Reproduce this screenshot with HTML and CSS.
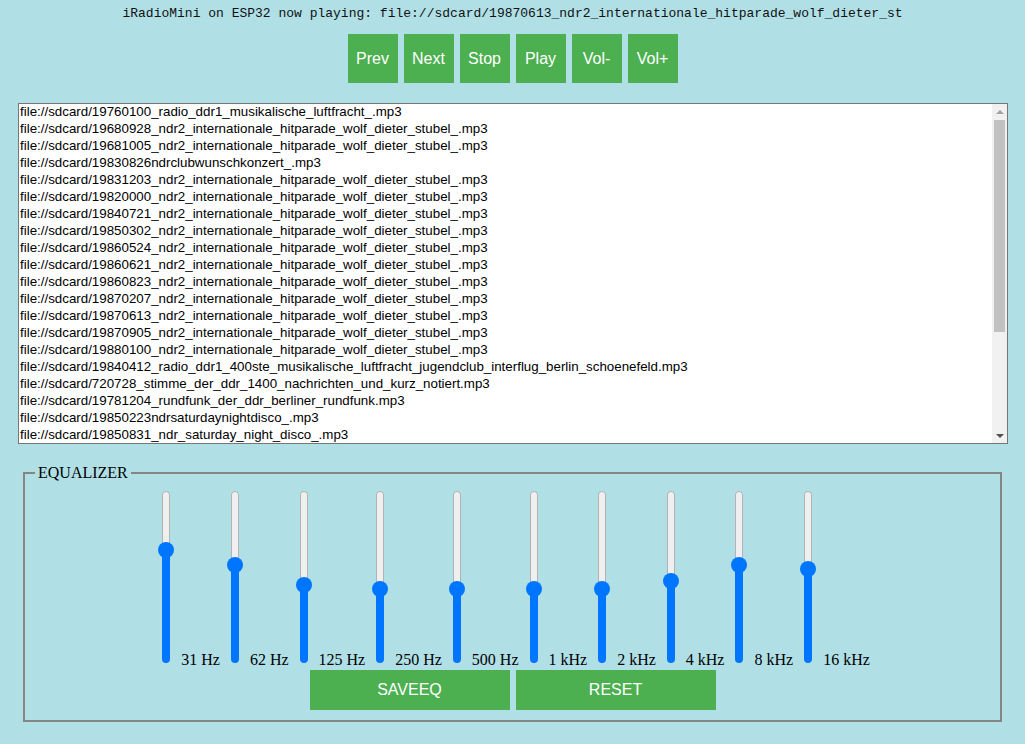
FILE: index.html
```html
<!DOCTYPE html>
<html>
<head>
<meta charset="utf-8">
<title>iRadioMini</title>
<link rel="stylesheet" href="styles.css">
</head>
<body>
<div class="title">iRadioMini on ESP32 now playing: file://sdcard/19870613_ndr2_internationale_hitparade_wolf_dieter_st</div>
<div class="controls">
  <button class="btn">Prev</button>
  <button class="btn">Next</button>
  <button class="btn">Stop</button>
  <button class="btn">Play</button>
  <button class="btn">Vol-</button>
  <button class="btn">Vol+</button>
</div>
<div class="playlist">
  <div class="items">
    <div class="item">file://sdcard/19760100_radio_ddr1_musikalische_luftfracht_.mp3</div>
    <div class="item">file://sdcard/19680928_ndr2_internationale_hitparade_wolf_dieter_stubel_.mp3</div>
    <div class="item">file://sdcard/19681005_ndr2_internationale_hitparade_wolf_dieter_stubel_.mp3</div>
    <div class="item">file://sdcard/19830826ndrclubwunschkonzert_.mp3</div>
    <div class="item">file://sdcard/19831203_ndr2_internationale_hitparade_wolf_dieter_stubel_.mp3</div>
    <div class="item">file://sdcard/19820000_ndr2_internationale_hitparade_wolf_dieter_stubel_.mp3</div>
    <div class="item">file://sdcard/19840721_ndr2_internationale_hitparade_wolf_dieter_stubel_.mp3</div>
    <div class="item">file://sdcard/19850302_ndr2_internationale_hitparade_wolf_dieter_stubel_.mp3</div>
    <div class="item">file://sdcard/19860524_ndr2_internationale_hitparade_wolf_dieter_stubel_.mp3</div>
    <div class="item">file://sdcard/19860621_ndr2_internationale_hitparade_wolf_dieter_stubel_.mp3</div>
    <div class="item">file://sdcard/19860823_ndr2_internationale_hitparade_wolf_dieter_stubel_.mp3</div>
    <div class="item">file://sdcard/19870207_ndr2_internationale_hitparade_wolf_dieter_stubel_.mp3</div>
    <div class="item">file://sdcard/19870613_ndr2_internationale_hitparade_wolf_dieter_stubel_.mp3</div>
    <div class="item">file://sdcard/19870905_ndr2_internationale_hitparade_wolf_dieter_stubel_.mp3</div>
    <div class="item">file://sdcard/19880100_ndr2_internationale_hitparade_wolf_dieter_stubel_.mp3</div>
    <div class="item">file://sdcard/19840412_radio_ddr1_400ste_musikalische_luftfracht_jugendclub_interflug_berlin_schoenefeld.mp3</div>
    <div class="item">file://sdcard/720728_stimme_der_ddr_1400_nachrichten_und_kurz_notiert.mp3</div>
    <div class="item">file://sdcard/19781204_rundfunk_der_ddr_berliner_rundfunk.mp3</div>
    <div class="item">file://sdcard/19850223ndrsaturdaynightdisco_.mp3</div>
    <div class="item">file://sdcard/19850831_ndr_saturday_night_disco_.mp3</div>
  </div>
  <div class="scrollbar">
    <div class="sb-btn"><span class="arrow-up"></span></div>
    <div class="sb-track"><div class="sb-thumb"></div></div>
    <div class="sb-btn"><span class="arrow-down"></span></div>
  </div>
</div>
<fieldset class="eq">
  <legend class="eq-legend">EQUALIZER</legend>
  <div class="eq-row"><span class="slider"><span class="track"><span class="rest"></span><span class="fill" style="height:113px"></span></span><span class="thumb" style="bottom:105px"></span></span> 31 Hz <span class="slider"><span class="track"><span class="rest"></span><span class="fill" style="height:98px"></span></span><span class="thumb" style="bottom:90px"></span></span> 62 Hz <span class="slider"><span class="track"><span class="rest"></span><span class="fill" style="height:78px"></span></span><span class="thumb" style="bottom:70px"></span></span> 125 Hz <span class="slider"><span class="track"><span class="rest"></span><span class="fill" style="height:74px"></span></span><span class="thumb" style="bottom:66px"></span></span> 250 Hz <span class="slider"><span class="track"><span class="rest"></span><span class="fill" style="height:74px"></span></span><span class="thumb" style="bottom:66px"></span></span> 500 Hz <span class="slider"><span class="track"><span class="rest"></span><span class="fill" style="height:74px"></span></span><span class="thumb" style="bottom:66px"></span></span> 1 kHz <span class="slider"><span class="track"><span class="rest"></span><span class="fill" style="height:74px"></span></span><span class="thumb" style="bottom:66px"></span></span> 2 kHz <span class="slider"><span class="track"><span class="rest"></span><span class="fill" style="height:82px"></span></span><span class="thumb" style="bottom:74px"></span></span> 4 kHz <span class="slider"><span class="track"><span class="rest"></span><span class="fill" style="height:98px"></span></span><span class="thumb" style="bottom:90px"></span></span> 8 kHz <span class="slider"><span class="track"><span class="rest"></span><span class="fill" style="height:94px"></span></span><span class="thumb" style="bottom:86px"></span></span> 16 kHz</div>
  <div class="eq-actions">
    <button class="btn btn-wide">SAVEEQ</button>
    <button class="btn btn-wide">RESET</button>
  </div>
</fieldset>
</body>
</html>
```

FILE: styles.css
```css
html, body {
  margin: 0;
  padding: 0;
}
body {
  background: #b0e0e6;
  font-family: "Liberation Serif", serif;
  color: #000;
  width: 1025px;
}
.title {
  font-family: "Liberation Mono", monospace;
  font-size: 13px;
  line-height: 15px;
  padding-top: 6px;
  text-align: center;
  color: #111;
  white-space: nowrap;
}
.controls {
  display: flex;
  justify-content: center;
  gap: 6px;
  margin-top: 13px;
}
.btn {
  background: #4caf50;
  color: #fff;
  border: none;
  margin: 0;
  padding: 0;
  font-family: "Liberation Sans", Arial, sans-serif;
  font-size: 16px;
  width: 50px;
  height: 49px;
  display: flex;
  align-items: center;
  justify-content: center;
}
.playlist {
  box-sizing: border-box;
  display: flex;
  margin: 20px 0 0 18px;
  width: 990px;
  height: 341px;
  background: #fff;
  border: 1px solid #767676;
  font-family: "Liberation Sans", Arial, sans-serif;
  font-size: 13.333px;
  color: #000;
}
.items {
  flex: 1;
  overflow: hidden;
}
.item {
  height: 17px;
  line-height: 16px;
  padding: 0 2px 1px 1px;
  box-sizing: border-box;
  white-space: nowrap;
}
.scrollbar {
  width: 15px;
  flex: none;
  display: flex;
  flex-direction: column;
  background: #f1f1f1;
}
.sb-btn {
  height: 15px;
  display: flex;
  align-items: center;
  justify-content: center;
}
.arrow-up {
  width: 0;
  height: 0;
  border-left: 4px solid transparent;
  border-right: 4px solid transparent;
  border-bottom: 4px solid #a3a3a3;
}
.arrow-down {
  width: 0;
  height: 0;
  border-left: 4px solid transparent;
  border-right: 4px solid transparent;
  border-top: 4px solid #505050;
}
.sb-track {
  flex: 1;
  padding: 1px 2px 0;
}
.sb-thumb {
  height: 212px;
  background: #c1c1c1;
}
.eq {
  margin: 20px 0 0 23px;
  width: 979px;
  box-sizing: border-box;
  border: 2px solid #858585;
  padding: 9px 12px 10px;
}
.eq-legend {
  font-family: "Liberation Serif", serif;
  font-size: 16px;
  line-height: 18px;
  padding: 0 3px;
  margin-left: -2px;
}
.eq-row {
  text-align: center;
  font-size: 16px;
  white-space: nowrap;
  line-height: 18px;
}
.slider {
  display: inline-block;
  position: relative;
  overflow: hidden;
  width: 16px;
  height: 172px;
  margin: 0 3px 2px;
  vertical-align: baseline;
}
.track {
  display: flex;
  flex-direction: column;
  width: 8px;
  height: 100%;
  margin: 0 auto;
  border-radius: 4px;
  overflow: hidden;
}
.rest {
  flex: 1;
  background: #efefef;
  border: 1px solid #b2b2b2;
  border-bottom: none;
  border-radius: 4px 4px 0 0;
}
.fill {
  background: #0075ff;
  flex: none;
}
.thumb {
  position: absolute;
  left: 0;
  width: 16px;
  height: 16px;
  border-radius: 50%;
  background: #0075ff;
}
.eq-actions {
  display: flex;
  justify-content: center;
  gap: 6px;
  margin-top: 1px;
}
.btn-wide {
  width: 200px;
  height: 40px;
}
```
